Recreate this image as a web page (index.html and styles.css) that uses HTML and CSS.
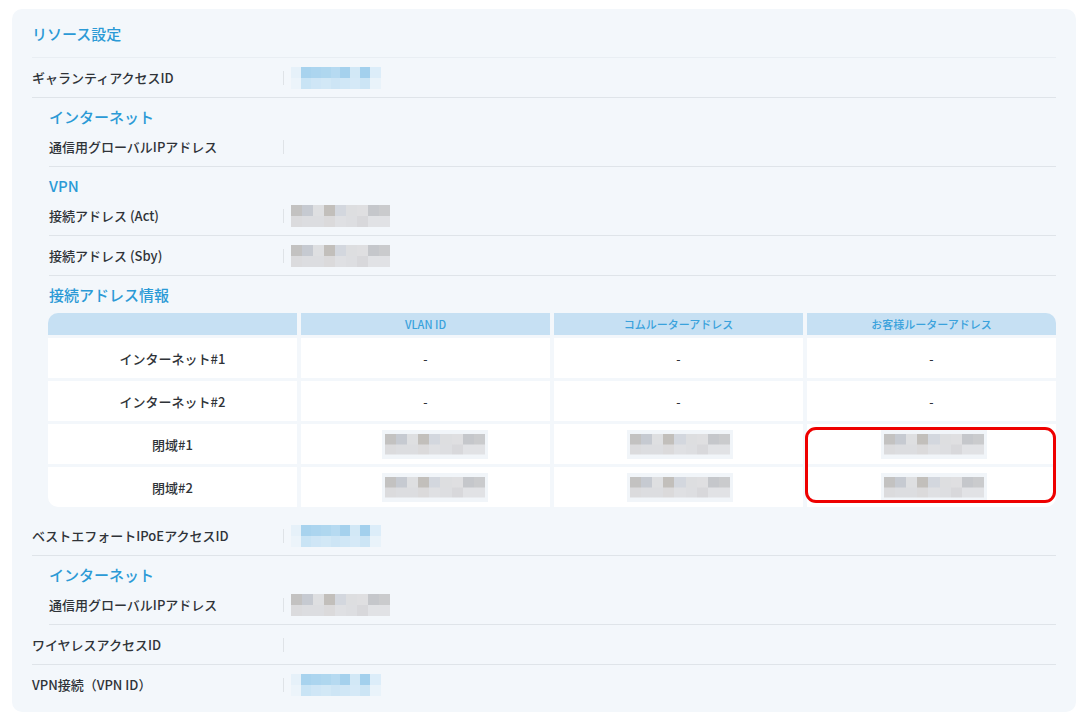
FILE: index.html
```html
<!DOCTYPE html>
<html lang="ja">
<head>
<meta charset="utf-8">
<title>リソース設定</title>
<link rel="stylesheet" href="styles.css">
</head>
<body>
<div class="card">
  <h2 class="title">リソース設定</h2>

  <div class="row">
    <div class="label">ギャランティアクセスID</div>
    <div class="value"><span class="sep"></span><span class="blur blue"></span></div>
  </div>

  <div class="sub">
    <div class="sub-head">インターネット</div>
    <div class="row">
      <div class="label">通信用グローバルIPアドレス</div>
      <div class="value"><span class="sep"></span></div>
    </div>
    <div class="sub-head">VPN</div>
    <div class="row">
      <div class="label">接続アドレス (Act)</div>
      <div class="value"><span class="sep"></span><span class="blur gray"></span></div>
    </div>
    <div class="row">
      <div class="label">接続アドレス (Sby)</div>
      <div class="value"><span class="sep"></span><span class="blur gray"></span></div>
    </div>
    <div class="sub-head">接続アドレス情報</div>
  </div>

  <div class="table">
    <div class="th first"></div>
    <div class="th">VLAN ID</div>
    <div class="th">コムルーターアドレス</div>
    <div class="th last">お客様ルーターアドレス</div>

    <div class="td name">インターネット#1</div>
    <div class="td">-</div>
    <div class="td">-</div>
    <div class="td">-</div>

    <div class="td name">インターネット#2</div>
    <div class="td">-</div>
    <div class="td">-</div>
    <div class="td">-</div>

    <div class="td name">閉域#1</div>
    <div class="td"><span class="blur cell shift-l"></span></div>
    <div class="td"><span class="blur cell shift-s"></span></div>
    <div class="td"><span class="blur cell shift-m"></span></div>

    <div class="td name bl">閉域#2</div>
    <div class="td"><span class="blur cell shift-l"></span></div>
    <div class="td"><span class="blur cell shift-s"></span></div>
    <div class="td br"><span class="blur cell shift-m"></span></div>

    <div class="highlight"></div>
  </div>

  <div class="row after-table">
    <div class="label">ベストエフォートIPoEアクセスID</div>
    <div class="value"><span class="sep"></span><span class="blur blue"></span></div>
  </div>

  <div class="sub">
    <div class="sub-head">インターネット</div>
    <div class="row">
      <div class="label">通信用グローバルIPアドレス</div>
      <div class="value"><span class="sep"></span><span class="blur gray"></span></div>
    </div>
  </div>

  <div class="row">
    <div class="label">ワイヤレスアクセスID</div>
    <div class="value"><span class="sep"></span></div>
  </div>

  <div class="row last-row">
    <div class="label">VPN接続（VPN ID）</div>
    <div class="value"><span class="sep"></span><span class="blur blue"></span></div>
  </div>
</div>
</body>
</html>
```

FILE: styles.css
```css
* { box-sizing: border-box; }

body {
  margin: 0;
  background: #ffffff;
  font-family: "Noto Sans CJK JP", "Noto Sans", sans-serif;
  color: #2f3338;
}

.card {
  margin: 9px 10px 8px 12px;
  width: 1064px;
  height: 703px;
  background: #f3f7fb;
  border-radius: 10px;
  padding: 0 20px;
}

.title {
  margin: 0;
  height: 49px;
  padding-top: 14px;
  font-size: 15px;
  line-height: 22px;
  font-weight: 500;
  color: #2b9ad6;
  border-bottom: 1px solid #e9eef3;
}

.row {
  display: flex;
  align-items: center;
  height: 40px;
  border-bottom: 1px solid #dfe4e9;
}

.row.last-row { border-bottom: none; }

.label {
  width: 251px;
  flex: none;
  font-size: 13px;
  font-weight: 500;
  color: #2f3338;
  line-height: 18px;
}

.sub { padding-left: 17px; }
.sub .label { width: 234px; }

.sub-head {
  height: 29px;
  padding-top: 9px;
  font-size: 15px;
  line-height: 20px;
  font-weight: 500;
  color: #2b9ad6;
}

.value {
  display: flex;
  align-items: center;
  gap: 7px;
}

.sep {
  width: 1px;
  height: 14px;
  background: #dfe3e7;
}

.blur { display: block; }

.blur.blue {
  width: 90px;
  height: 22px;
  background:
    linear-gradient(to right,
      #e6f1f9 0 11%, #a8d3ee 11% 22%, #acd5ef 22% 33%, #afd7ef 33% 44%,
      #b6daf1 44% 55%, #a5d1ed 55% 66%, #d2e8f6 66% 77%, #a3d0ed 77% 88%, #dcedf9 88% 100%)
      top / 100% 50% no-repeat,
    linear-gradient(to right,
      #ecf4fa 0 11%, #c9e4f5 11% 22%, #cfe6f6 22% 33%, #d2e8f6 33% 44%,
      #cde5f5 44% 55%, #d0e7f6 55% 66%, #d5e9f7 66% 77%, #cce5f5 77% 88%, #e9f3fa 88% 100%)
      bottom / 100% 50% no-repeat;
}

.blur.gray {
  width: 99px;
  height: 22px;
  background:
    linear-gradient(to right,
      #c3c2c1 0 11.1%, #c6cad1 11.1% 22.2%, #dedfe1 22.2% 33.3%, #c2bfbb 33.3% 44.4%,
      #d3d7de 44.4% 55.5%, #dddee0 55.5% 66.6%, #dfdfe1 66.6% 77.7%, #c5c7cb 77.7% 88.8%, #cacbcd 88.8% 100%)
      top / 100% 50% no-repeat,
    linear-gradient(to right,
      #dbdbdd 0 11.1%, #dcdde0 11.1% 22.2%, #dcdde0 22.2% 33.3%, #dbdadb 33.3% 44.4%,
      #dfe0e3 44.4% 55.5%, #dddee1 55.5% 66.6%, #d8d8db 66.6% 77.7%, #e1e2e5 77.7% 88.8%, #e1e2e5 88.8% 100%)
      bottom / 100% 50% no-repeat;
}

.blur.cell {
  width: 106px;
  height: 29px;
  border: 3px solid #f1f5f9;
  border-width: 4px 3px;
  background:
    linear-gradient(to right,
      #c3c2c1 0 11.1%, #c6cad1 11.1% 22.2%, #dedfe1 22.2% 33.3%, #c2bfbb 33.3% 44.4%,
      #d3d7de 44.4% 55.5%, #dddee0 55.5% 66.6%, #dfdfe1 66.6% 77.7%, #c5c7cb 77.7% 88.8%, #cacbcd 88.8% 100%)
      top / 100% 50% no-repeat,
    linear-gradient(to right,
      #dbdbdd 0 11.1%, #dcdde0 11.1% 22.2%, #dcdde0 22.2% 33.3%, #dbdadb 33.3% 44.4%,
      #dfe0e3 44.4% 55.5%, #dddee1 55.5% 66.6%, #d8d8db 66.6% 77.7%, #e1e2e5 77.7% 88.8%, #e1e2e5 88.8% 100%)
      bottom / 100% 50% no-repeat;
  background-origin: content-box;
  background-clip: content-box;
  background-color: #f1f5f9;
}

.blur.cell.shift-l { margin-left: 19px; }
.blur.cell.shift-s { margin-left: 3px; }
.blur.cell.shift-m { margin-left: 5px; }

.table {
  position: relative;
  margin: 8px 0 0 16px;
  display: grid;
  grid-template-columns: repeat(4, 249px);
  grid-template-rows: 22px repeat(4, 40px);
  column-gap: 4px;
  row-gap: 3px;
}

.th {
  background: #c6e0f3;
  color: #3aa2dc;
  font-size: 11px;
  font-weight: 500;
  display: flex;
  align-items: center;
  justify-content: center;
}

.th.first { border-top-left-radius: 10px; }
.th.last { border-top-right-radius: 10px; }

.td {
  background: #ffffff;
  display: flex;
  align-items: center;
  justify-content: center;
  font-size: 12px;
  font-weight: 500;
  color: #2f3338;
}

.td.name { font-size: 13px; }
.td.bl { border-bottom-left-radius: 10px; }
.td.br { border-bottom-right-radius: 10px; }

.highlight {
  position: absolute;
  left: 757px;
  top: 114px;
  width: 251px;
  height: 76px;
  border: 3px solid #ee0000;
  border-radius: 11px;
  pointer-events: none;
}

.row.after-table { margin-top: 9px; }
```
